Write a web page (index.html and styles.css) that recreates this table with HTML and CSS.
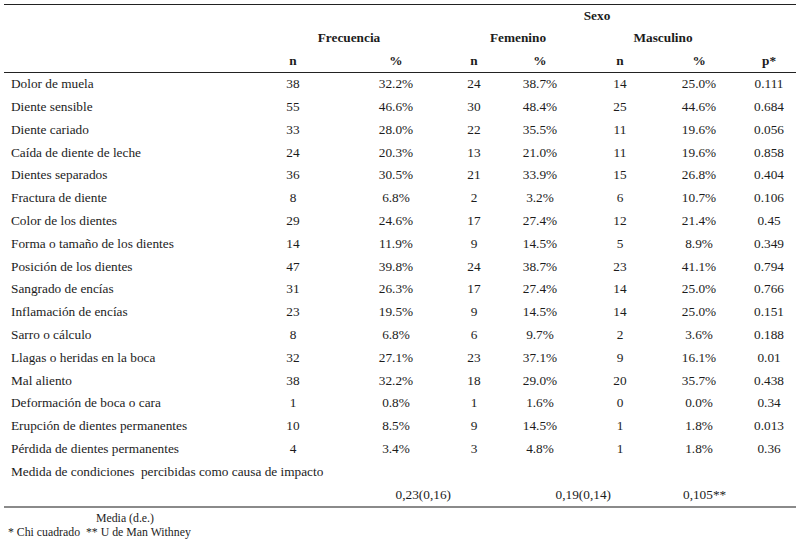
FILE: index.html
```html
<!DOCTYPE html>
<html lang="es">
<head>
<meta charset="utf-8">
<title>Tabla</title>
<link rel="stylesheet" href="styles.css">
</head>
<body>
<table class="tbl">
  <colgroup>
    <col class="c-label"><col class="c-n1"><col class="c-p1"><col class="c-n2"><col class="c-p2"><col class="c-n3"><col class="c-p3"><col class="c-pv">
  </colgroup>
  <thead>
    <tr class="hrow"><th></th><th></th><th></th><th colspan="4">Sexo</th><th></th></tr>
    <tr class="hrow"><th></th><th colspan="2">Frecuencia</th><th colspan="2">Femenino</th><th colspan="2">Masculino</th><th></th></tr>
    <tr class="hrow last"><th></th><th>n</th><th>%</th><th>n</th><th>%</th><th>n</th><th>%</th><th>p*</th></tr>
  </thead>
  <tbody>
    <tr><td class="lbl">Dolor de muela</td><td>38</td><td>32.2%</td><td>24</td><td>38.7%</td><td>14</td><td>25.0%</td><td>0.111</td></tr>
    <tr><td class="lbl">Diente sensible</td><td>55</td><td>46.6%</td><td>30</td><td>48.4%</td><td>25</td><td>44.6%</td><td>0.684</td></tr>
    <tr><td class="lbl">Diente cariado</td><td>33</td><td>28.0%</td><td>22</td><td>35.5%</td><td>11</td><td>19.6%</td><td>0.056</td></tr>
    <tr><td class="lbl">Caída de diente de leche</td><td>24</td><td>20.3%</td><td>13</td><td>21.0%</td><td>11</td><td>19.6%</td><td>0.858</td></tr>
    <tr><td class="lbl">Dientes separados</td><td>36</td><td>30.5%</td><td>21</td><td>33.9%</td><td>15</td><td>26.8%</td><td>0.404</td></tr>
    <tr><td class="lbl">Fractura de diente</td><td>8</td><td>6.8%</td><td>2</td><td>3.2%</td><td>6</td><td>10.7%</td><td>0.106</td></tr>
    <tr><td class="lbl">Color de los dientes</td><td>29</td><td>24.6%</td><td>17</td><td>27.4%</td><td>12</td><td>21.4%</td><td>0.45</td></tr>
    <tr><td class="lbl">Forma o tamaño de los dientes</td><td>14</td><td>11.9%</td><td>9</td><td>14.5%</td><td>5</td><td>8.9%</td><td>0.349</td></tr>
    <tr><td class="lbl">Posición de los dientes</td><td>47</td><td>39.8%</td><td>24</td><td>38.7%</td><td>23</td><td>41.1%</td><td>0.794</td></tr>
    <tr><td class="lbl">Sangrado de encías</td><td>31</td><td>26.3%</td><td>17</td><td>27.4%</td><td>14</td><td>25.0%</td><td>0.766</td></tr>
    <tr><td class="lbl">Inflamación de encías</td><td>23</td><td>19.5%</td><td>9</td><td>14.5%</td><td>14</td><td>25.0%</td><td>0.151</td></tr>
    <tr><td class="lbl">Sarro o cálculo</td><td>8</td><td>6.8%</td><td>6</td><td>9.7%</td><td>2</td><td>3.6%</td><td>0.188</td></tr>
    <tr><td class="lbl">Llagas o heridas en la boca</td><td>32</td><td>27.1%</td><td>23</td><td>37.1%</td><td>9</td><td>16.1%</td><td>0.01</td></tr>
    <tr><td class="lbl">Mal aliento</td><td>38</td><td>32.2%</td><td>18</td><td>29.0%</td><td>20</td><td>35.7%</td><td>0.438</td></tr>
    <tr><td class="lbl">Deformación de boca o cara</td><td>1</td><td>0.8%</td><td>1</td><td>1.6%</td><td>0</td><td>0.0%</td><td>0.34</td></tr>
    <tr><td class="lbl">Erupción de dientes permanentes</td><td>10</td><td>8.5%</td><td>9</td><td>14.5%</td><td>1</td><td>1.8%</td><td>0.013</td></tr>
    <tr><td class="lbl">Pérdida de dientes permanentes</td><td>4</td><td>3.4%</td><td>3</td><td>4.8%</td><td>1</td><td>1.8%</td><td>0.36</td></tr>
    <tr><td class="lbl" colspan="8">Medida de condiciones&nbsp; percibidas como causa de impacto</td></tr>
    <tr class="last"><td></td><td colspan="2" class="m1">0,23(0,16)</td><td colspan="3" class="m2">0,19(0,14)</td><td colspan="2" class="m3">0,105**</td></tr>
  </tbody>
</table>
<div class="notes">
  <div class="note-media">Media (d.e.)</div>
  <div>* Chi cuadrado&nbsp; ** U de Man Withney</div>
</div>
</body>
</html>
```

FILE: styles.css
```css
html, body {
  margin: 0;
  padding: 0;
  background: #fff;
}

body {
  font-family: "Liberation Serif", "Times New Roman", serif;
  color: #1c1c1c;
  width: 805px;
  height: 544px;
  overflow: hidden;
}

.tbl {
  margin: 4px 0 0 4px;
  width: 792px;
  table-layout: fixed;
  border-collapse: collapse;
  font-size: 13.3px;
  border-top: 1px solid #222;
  border-bottom: 2px solid #8a8a8a;
}

.c-label { width: 242px; }
.c-n1 { width: 94px; }
.c-p1 { width: 112px; }
.c-n2 { width: 44px; }
.c-p2 { width: 88px; }
.c-n3 { width: 72px; }
.c-p3 { width: 86px; }
.c-pv { width: 54px; }

.tbl th,
.tbl td {
  padding: 0;
  text-align: center;
  white-space: nowrap;
  vertical-align: middle;
}

.tbl th {
  font-weight: bold;
  height: 22.4px;
  line-height: 22.4px;
}

.hrow.last th {
  border-bottom: 1px solid #222;
}

.tbl td {
  height: 22.8px;
  line-height: 22.8px;
}

.tbl td.lbl {
  text-align: left;
  padding-left: 7px;
}

.tbl td.m1 {
  text-align: right;
  padding-right: 1px;
}

.tbl td.m2 {
  text-align: right;
  padding-right: 45px;
}

.tbl td.m3 {
  text-align: left;
  padding-left: 27px;
}

.notes {
  margin-top: 3px;
  padding-left: 8px;
  font-size: 11.8px;
  line-height: 14px;
}

.note-media {
  padding-left: 88px;
}
```
